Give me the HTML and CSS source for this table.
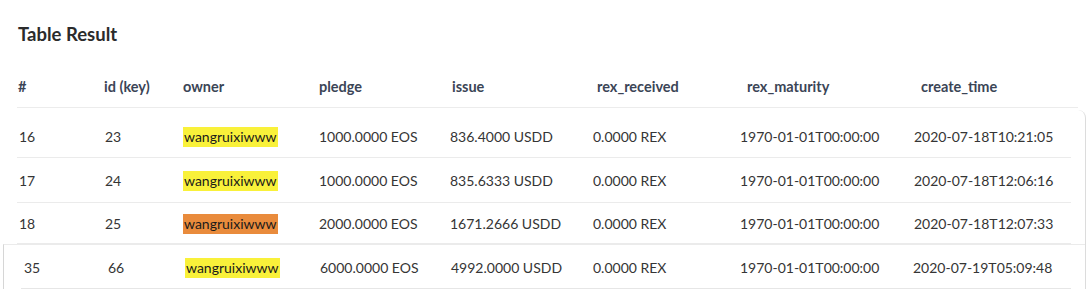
FILE: index.html
```html
<!DOCTYPE html>
<html lang="en">
<head>
<meta charset="utf-8">
<title>Table Result</title>
<link rel="stylesheet" href="styles.css">
</head>
<body>
<div class="page">
  <h2 class="title">Table Result</h2>
  <div class="head">
    <div>#</div><div>id (key)</div><div>owner</div><div>pledge</div><div>issue</div><div>rex_received</div><div>rex_maturity</div><div>create_time</div>
  </div>
  <div class="card">
    <div class="row first">
      <div>16</div><div>23</div><div><span class="hl">wangruixiwww</span></div><div>1000.0000 EOS</div><div>836.4000 USDD</div><div>0.0000 REX</div><div>1970-01-01T00:00:00</div><div>2020-07-18T10:21:05</div>
    </div>
    <div class="row">
      <div>17</div><div>24</div><div><span class="hl">wangruixiwww</span></div><div>1000.0000 EOS</div><div>835.6333 USDD</div><div>0.0000 REX</div><div>1970-01-01T00:00:00</div><div>2020-07-18T12:06:16</div>
    </div>
    <div class="row short">
      <div>18</div><div>25</div><div><span class="hl orange">wangruixiwww</span></div><div>2000.0000 EOS</div><div>1671.2666 USDD</div><div>0.0000 REX</div><div>1970-01-01T00:00:00</div><div>2020-07-18T12:07:33</div>
    </div>
    <div class="pasted">
      <div class="row last">
        <div>35</div><div>66</div><div><span class="hl">wangruixiwww</span></div><div>6000.0000 EOS</div><div>4992.0000 USDD</div><div>0.0000 REX</div><div>1970-01-01T00:00:00</div><div>2020-07-19T05:09:48</div>
      </div>
    </div>
  </div>
</div>
</body>
</html>
```
FILE: styles.css
```css
* { box-sizing: border-box; }
html, body { margin: 0; padding: 0; background: #fff; }
body {
  font-family: Lato, "Open Sans", "Liberation Sans", sans-serif;
  color: #333;
  width: 1088px;
  height: 291px;
  overflow: hidden;
}
.page { padding-top: 22px; }
.title {
  margin: 0 0 0 18px;
  font-size: 18.5px;
  line-height: 24px;
  font-weight: 700;
  color: #2b2b2b;
}
.head {
  display: grid;
  grid-template-columns: 87px 79px 136px 133px 145px 150px 174px 1fr;
  margin: 0 10px 0 17px;
  height: 62px;
  padding-top: 19px;
  align-items: center;
  border-bottom: 1px solid #ececec;
  font-size: 14.5px;
  font-weight: 700;
  color: #3b4556;
}
.head > div:first-child { padding-left: 1px; }
.card {
  border-right: 1px solid #dcdcdc;
  border-top-right-radius: 8px;
  width: 1086px;
  margin-top: 2px;
}
.row {
  display: grid;
  grid-template-columns: 88px 78px 136px 131px 143px 147px 174px 1fr;
  margin: 0 14px 0 17px;
  height: 45px;
  align-items: center;
  border-bottom: 1px solid #ebebeb;
  font-size: 14px;
  color: #353535;
}
.row > div:first-child { padding-left: 2px; }
.row.first { height: 48px; padding-top: 6px; }
.row.short { height: 41px; }
.hl {
  background: #f9f13a;
  color: #1a1a1a;
  padding: 1px 1px 2px 1px;
}
.hl.orange { background: #e98b3c; }
.pasted {
  border-left: 1px solid #d6d6d6;
  padding-top: 2px;
  border-top: 1px solid #ebebeb;
  margin-left: 3px;
}
.pasted .row {
  grid-template-columns: 87px 77px 135px 131px 142px 147px 173px 1fr;
  margin: 0 14px 0 17px;
  height: 42px;
  border-bottom-color: #e6e6e6;
}
.pasted .row > div:first-child { padding-left: 3px; }
```
